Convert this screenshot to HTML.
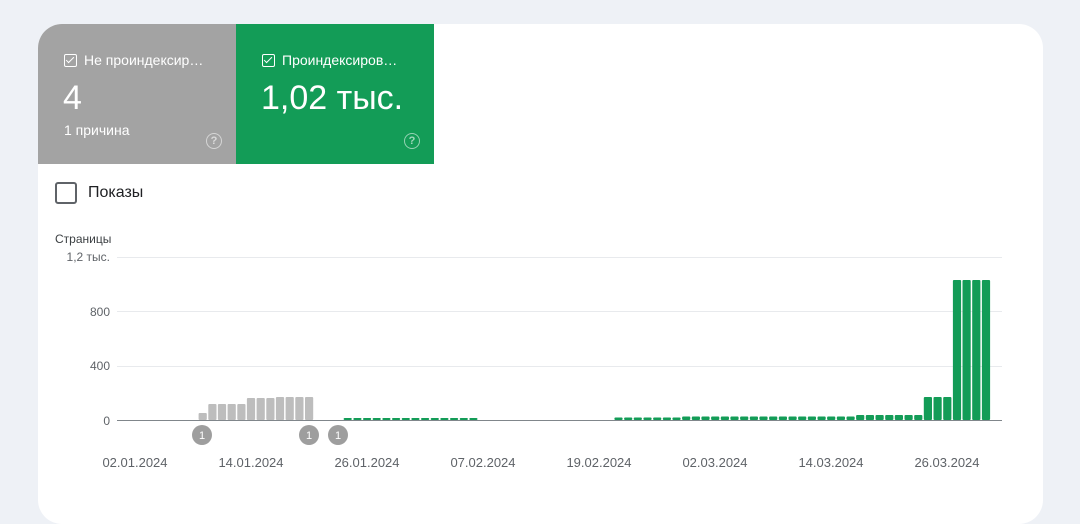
<!DOCTYPE html>
<html><head><meta charset="utf-8"><style>
body{margin:0;width:1080px;height:506px;background:#eef1f6;font-family:"Liberation Sans",sans-serif;overflow:hidden;position:relative}
.card{position:absolute;left:38px;top:24px;width:1005px;height:500px;background:#fff;border-radius:24px;overflow:hidden}
.tile{position:absolute;top:0;height:140px;width:198px;color:#fff}
.t1{left:0;background:#a3a3a3}
.t2{left:198px;background:#139c57}
.lbl{position:absolute;left:26px;top:28px;font-size:14px;white-space:nowrap}
.cb{display:inline-block;width:11px;height:11px;border:1.5px solid #fff;border-radius:2px;vertical-align:-2px;margin-right:7px;position:relative}
.cb:after{content:"";position:absolute;left:3px;top:0px;width:3px;height:7px;border:solid #fff;border-width:0 1.5px 1.5px 0;transform:rotate(45deg)}
.big{position:absolute;left:25px;top:55px;font-size:34px}
.sub{position:absolute;left:26px;top:98px;font-size:14px}
.q{position:absolute;right:14px;top:109px;width:14px;height:14px;border:1.5px solid rgba(255,255,255,.55);border-radius:50%;font-size:11px;line-height:14px;text-align:center;color:rgba(255,255,255,.6);font-weight:bold}
.pk{position:absolute;left:17px;top:158px;width:18px;height:18px;border:2px solid #5f6368;border-radius:3px}
.pkt{position:absolute;left:50px;top:160px;font-size:16px;color:#202124}
</style></head><body>
<div class="card">
<div class="tile t1"><div class="lbl"><span class="cb"></span>Не проиндексир…</div><div class="big">4</div><div class="sub">1 причина</div><div class="q">?</div></div>
<div class="tile t2"><div class="lbl"><span class="cb"></span>Проиндексиров…</div><div class="big">1,02 тыс.</div><div class="q">?</div></div>
<div class="pk"></div><div class="pkt">Показы</div>
</div>
<svg id="ch" width="1080" height="506" style="position:absolute;left:0;top:0" font-family="Liberation Sans, sans-serif">
<text x="55" y="243" font-size="12" fill="#3c4043">Страницы</text>
<g font-size="12" fill="#5f6368" text-anchor="end">
<text x="110" y="261">1,2 тыс.</text><text x="110" y="316">800</text><text x="110" y="370">400</text><text x="110" y="425">0</text></g>
<g stroke="#e8eaed" stroke-width="1"><line x1="117" y1="257.5" x2="1002" y2="257.5"/><line x1="117" y1="311.5" x2="1002" y2="311.5"/><line x1="117" y1="366.5" x2="1002" y2="366.5"/></g>
<g id="bars"></g>
<line x1="117" y1="420.5" x2="1002" y2="420.5" stroke="#80868b" stroke-width="1"/>
<g font-size="13" fill="#5f6368" text-anchor="middle">
<text x="135" y="467">02.01.2024</text><text x="251" y="467">14.01.2024</text><text x="367" y="467">26.01.2024</text><text x="483" y="467">07.02.2024</text><text x="599" y="467">19.02.2024</text><text x="715" y="467">02.03.2024</text><text x="831" y="467">14.03.2024</text><text x="947" y="467">26.03.2024</text></g>
<g fill="#9e9e9e"><circle cx="202" cy="435" r="10"/><circle cx="309" cy="435" r="10"/><circle cx="338" cy="435" r="10"/></g>
<g font-size="11" fill="#fff" text-anchor="middle"><text x="202" y="439">1</text><text x="309" y="439">1</text><text x="338" y="439">1</text></g>
</svg>
<script>
var g=document.getElementById('bars'),s='';
function b(d,top,c){var x=135+9.67*d-4.1;s+='<rect x="'+x.toFixed(1)+'" y="'+top+'" width="8.2" height="'+(420-top)+'" rx="1" fill="'+c+'"/>';}
var G='#bdbdbd',N='#139c57';
b(7,413,G);for(var d=8;d<=11;d++)b(d,404,G);for(d=12;d<=14;d++)b(d,398,G);for(d=15;d<=18;d++)b(d,397,G);
for(d=22;d<=35;d++)b(d,418,N);for(d=50;d<=56;d++)b(d,417.5,N);for(d=57;d<=74;d++)b(d,416.5,N);for(d=75;d<=81;d++)b(d,415,N);
for(d=82;d<=84;d++)b(d,397,N);for(d=85;d<=88;d++)b(d,280,N);
g.innerHTML=s;
</script>
</body></html>
